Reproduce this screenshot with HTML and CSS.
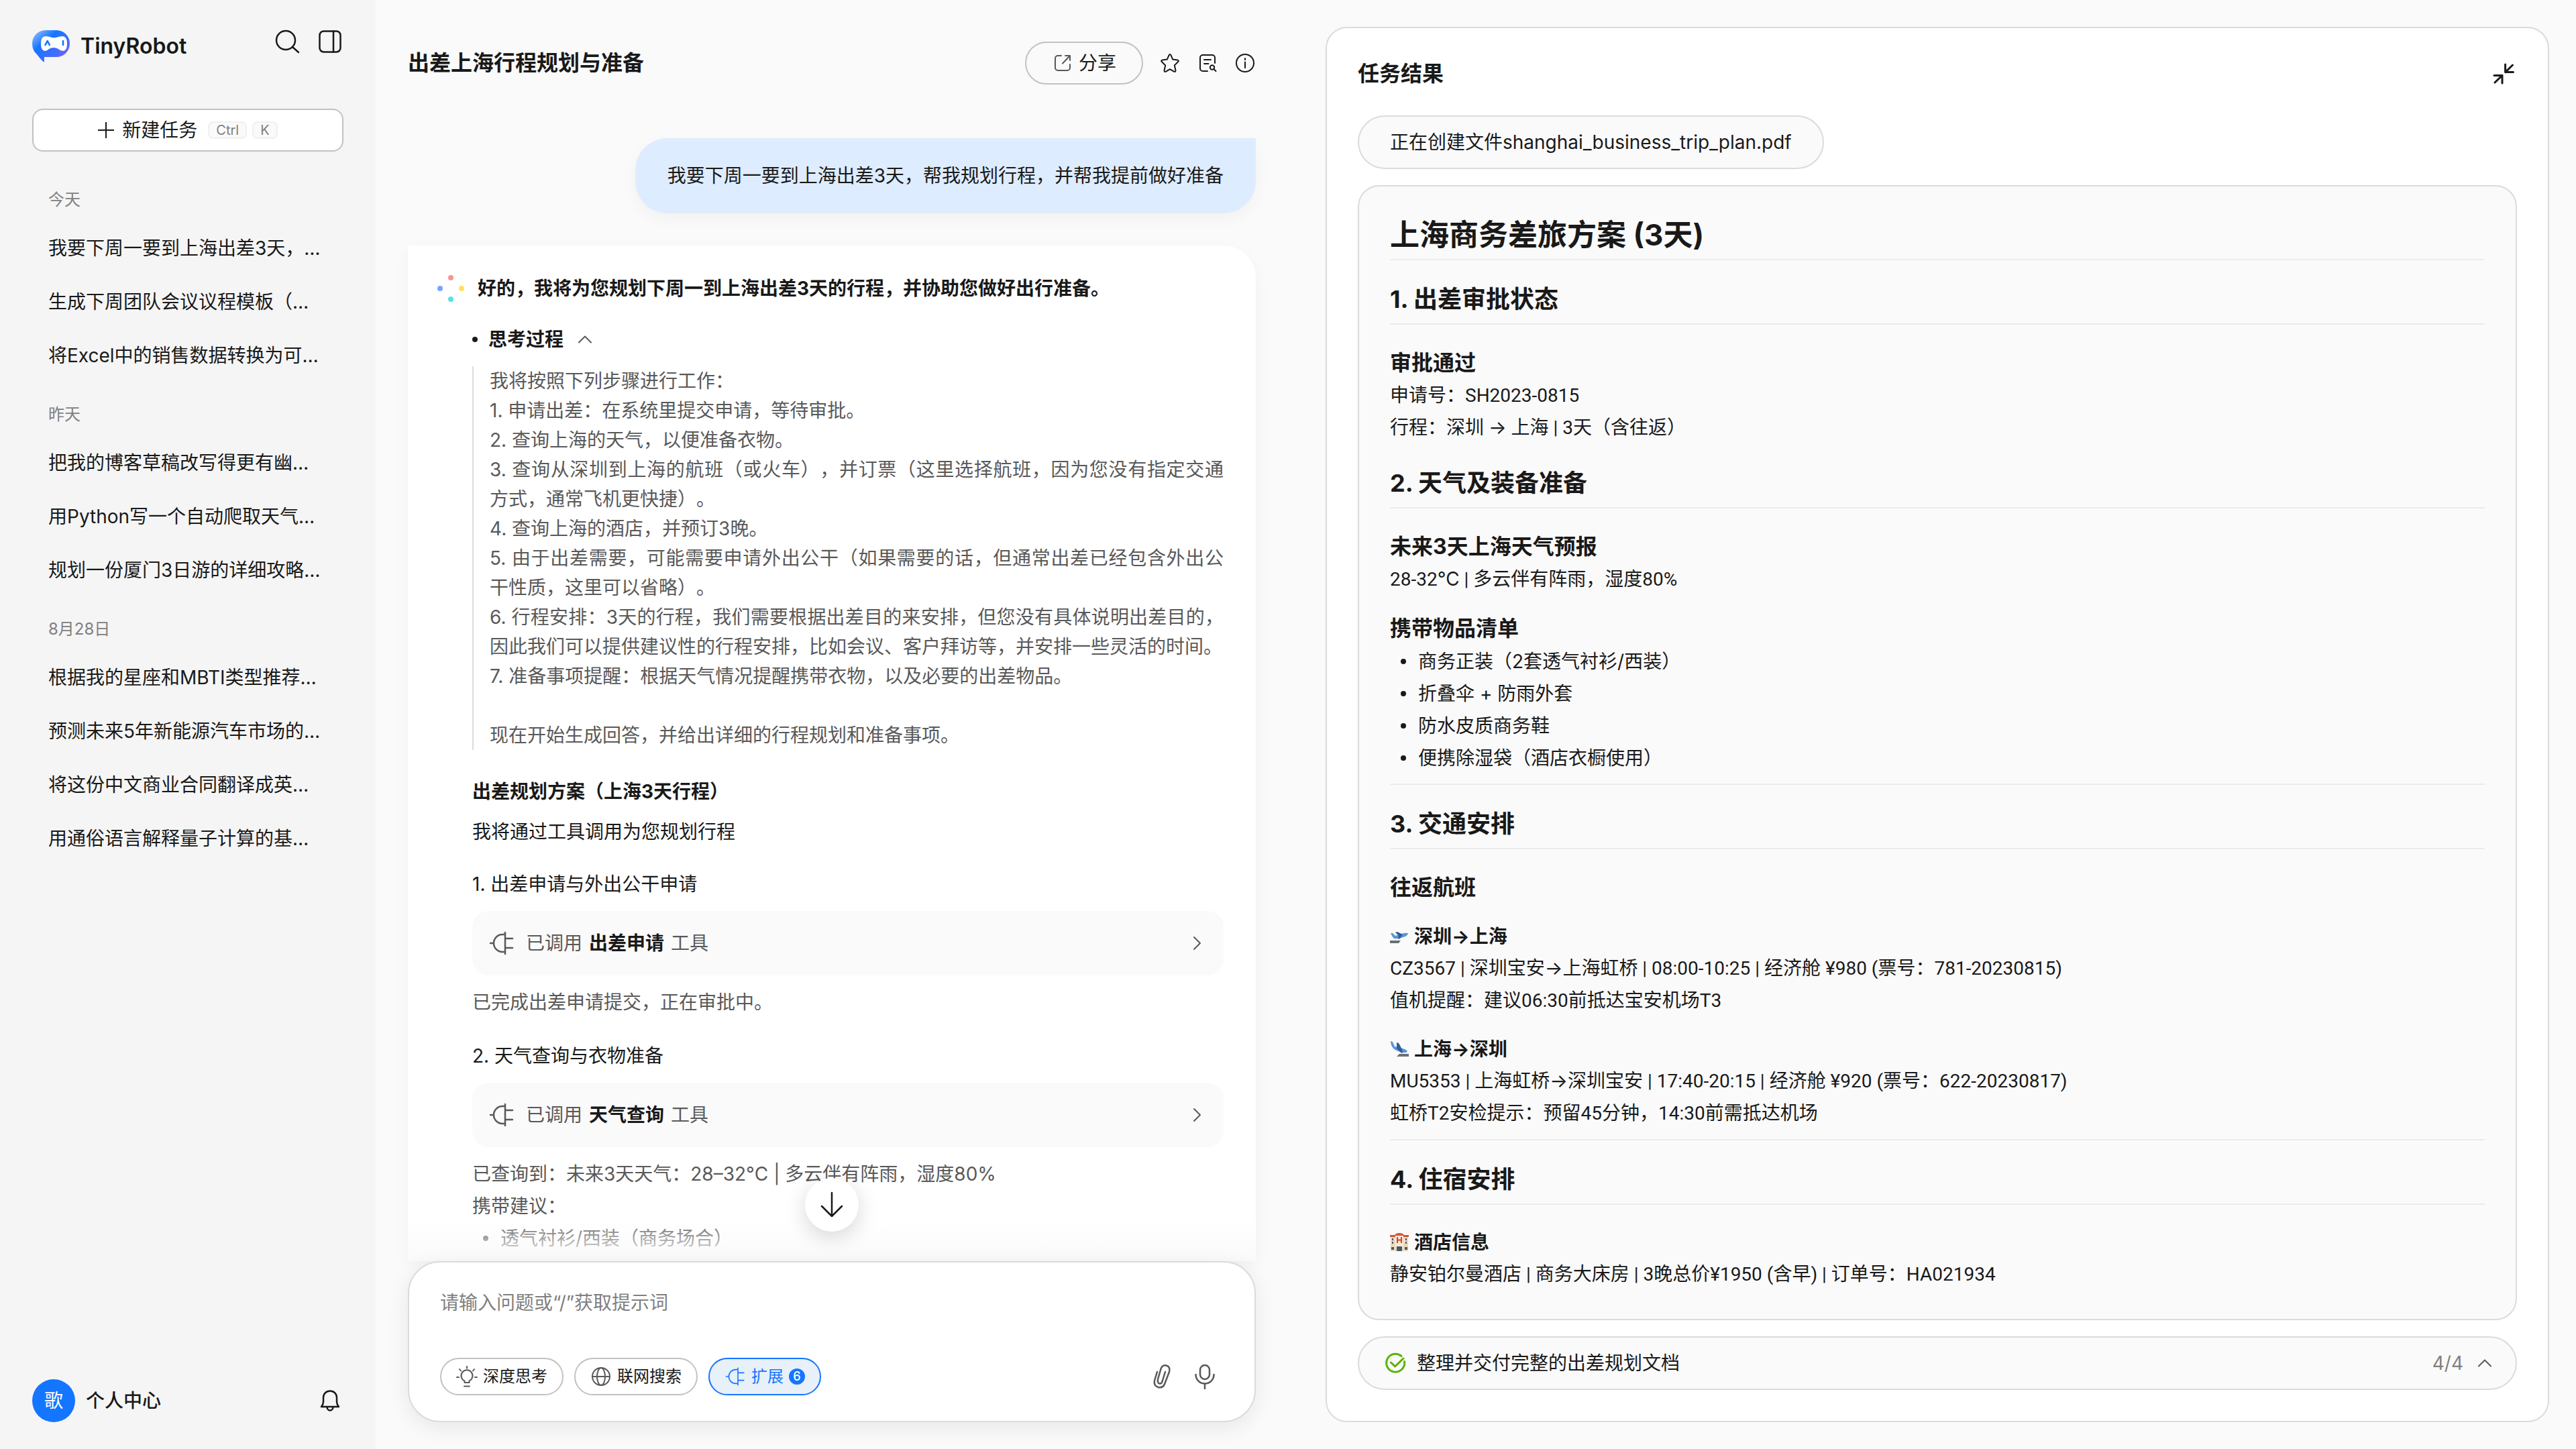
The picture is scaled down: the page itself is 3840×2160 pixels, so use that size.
FILE: index.html
```html
<!DOCTYPE html>
<html lang="zh-CN">

<head>
    <meta charset="UTF-8">
    <meta name="viewport" content="width=device-width,initial-scale=1.0">
    <title>TinyRobot</title>
    <link rel="stylesheet" href="styles.css">
</head>

<body>
    <!-- Shared icons -->
    <svg class="sprite" aria-hidden="true">
        <symbol id="plug" viewBox="0 0 40 40">
            <path d="M3 20h5M25 4v32M25 7h-4a13 13 0 0 0 0 26h4M25 13h11M25 27h11" />
        </symbol>
        <symbol id="up" viewBox="0 0 32 32">
            <path d="M7 20.500l9-9 9 9" />
        </symbol>
        <symbol id="right" viewBox="0 0 32 32">
            <path d="M12 7l9 9-9 9" />
        </symbol>
    </svg>

    <aside class="sidebar">
        <header class="brand">
            <svg class="logo" viewBox="0 0 56 48">
                <defs>
                    <linearGradient id="lg" x1="0" y1="0" x2="1" y2="1">
                        <stop offset="0" stop-color="#a9c4ff" />
                        <stop offset=".35" stop-color="#1476ff" />
                        <stop offset=".7" stop-color="#4a6bff" />
                        <stop offset="1" stop-color="#a05cf0" />
                    </linearGradient>
                </defs>
                <path fill="url(#lg)" d="M20 0h16a20 20 0 0 1 20 20a20 20 0 0 1-20 20H18v6.500q0 1-1.500.5Q13 44 7 36Q0 30 0 20A20 20 0 0 1 20 0z" />
                <path fill="#fff" d="M20 9q5 0 8 1.500q5 1.500 9 0Q41 9 45 9q7 0 7 10.500q0 11.500-6 11.500q-4 0-7-3q-7-4-14 0q-3 3-6 3q-6 0-6-11q0-11 7-11z" />
                <path fill="none" stroke="#1476ff" stroke-width="2.600" stroke-linecap="round" stroke-linejoin="round" d="M19.500 22l3.200-6 3.200 6M46 16v6" />
            </svg>
            <span class="name">TinyRobot</span>
            <div class="tools">
                <button class="icon-btn" aria-label="搜索"><svg class="icon" viewBox="0 0 40 40"><circle cx="18" cy="18" r="14" /><path d="M28 28l9 8" /></svg></button>
                <button class="icon-btn" aria-label="收起侧栏"><svg class="icon" viewBox="0 0 40 40"><rect x="4.500" y="4.500" width="31" height="31" rx="6" /><path d="M25 4.500v31" /></svg></button>
            </div>
        </header>
        <button class="new-task">
            <svg class="icon plus" viewBox="0 0 24 24"><path d="M12 0v24M0 12h24" /></svg>
            <span>新建任务</span>
            <span class="keys"><kbd>Ctrl</kbd><kbd>K</kbd></span>
        </button>
        <nav class="history">
            <h2>今天</h2>
            <a href="#">我要下周一要到上海出差3天，…</a>
            <a href="#">生成下周团队会议议程模板（…</a>
            <a href="#">将Excel中的销售数据转换为可…</a>
            <h2>昨天</h2>
            <a href="#">把我的博客草稿改写得更有幽…</a>
            <a href="#">用Python写一个自动爬取天气…</a>
            <a href="#">规划一份厦门3日游的详细攻略…</a>
            <h2>8月28日</h2>
            <a href="#">根据我的星座和MBTI类型推荐…</a>
            <a href="#">预测未来5年新能源汽车市场的…</a>
            <a href="#">将这份中文商业合同翻译成英…</a>
            <a href="#">用通俗语言解释量子计算的基…</a>
        </nav>
        <footer class="user">
            <span class="avatar">歌</span>
            <span class="user-name">个人中心</span>
            <button class="icon-btn" aria-label="通知"><svg class="icon" viewBox="0 0 40 40"><path d="M20 5.500c-6 0-10 4.500-10 10v6c0 3-1 5-3 7.500h26c-2-2.500-3-4.500-3-7.500v-6c0-5.500-4-10-10-10zM15.500 29.500a4.500 5 0 0 0 9 0" /></svg></button>
        </footer>
    </aside>

    <main class="chat">
        <header class="chat-head">
            <h1>出差上海行程规划与准备</h1>
            <button class="share">
                <svg class="icon small grey" viewBox="0 0 32 32"><path d="M14 5H9a4 4 0 0 0-4 4v14a4 4 0 0 0 4 4h14a4 4 0 0 0 4-4v-5M20 5h7v7M27 5L16 16.500" /></svg>
                分享
            </button>
            <button class="icon-btn" aria-label="收藏"><svg class="icon small" viewBox="0 0 32 32"><path d="M14.600 4.200Q16 1.800 17.400 4.200L20.200 10.600L27.200 11.500Q30 12.100 28 14.200L22.800 19.400L24.400 26.800Q24.600 29.800 22 28.600L16 25.200L10 28.600Q7.400 29.800 7.600 26.800L9.200 19.400L4 14.200Q2 12.100 4.800 11.500L11.800 10.600z" /></svg></button>
            <button class="icon-btn" aria-label="记录"><svg class="icon small" viewBox="0 0 32 32"><path d="M27 16V8a4 4 0 0 0-4-4H9a4 4 0 0 0-4 4v16a4 4 0 0 0 4 4h7M11 11h10M11 17h6.500M25.500 25l3 3" /><circle cx="23" cy="22.500" r="3.200" /></svg></button>
            <button class="icon-btn" aria-label="信息"><svg class="icon small" viewBox="0 0 32 32"><circle cx="16" cy="16" r="13" /><path d="M16 14.500v8.500M16 9v2" /></svg></button>
        </header>

        <div class="bubble">我要下周一要到上海出差3天，帮我规划行程，并帮我提前做好准备</div>

        <article class="answer">
            <div class="answer-head">
                <svg class="dots" viewBox="0 0 40 40"><circle cx="20" cy="4" r="4" fill="#f79595" /><circle cx="4" cy="20" r="4" fill="#78a4ff" /><circle cx="36" cy="20" r="4" fill="#ffe15c" /><circle cx="20" cy="36" r="4" fill="#5ce0e0" /></svg>
                <strong>好的，我将为您规划下周一到上海出差3天的行程，并协助您做好出行准备。</strong>
            </div>
            <div class="answer-body">
                <button class="think"><i></i>思考过程<svg class="icon small grey"><use href="#up" /></svg></button>
                <div class="thought">
                    <p>我将按照下列步骤进行工作：</p>
                    <p>1. 申请出差：在系统里提交申请，等待审批。</p>
                    <p>2. 查询上海的天气，以便准备衣物。</p>
                    <p>3. 查询从深圳到上海的航班（或火车），并订票（这里选择航班，因为您没有指定交通方式，通常飞机更快捷）。</p>
                    <p>4. 查询上海的酒店，并预订3晚。</p>
                    <p>5. 由于出差需要，可能需要申请外出公干（如果需要的话，但通常出差已经包含外出公干性质，这里可以省略）。</p>
                    <p>6. 行程安排：3天的行程，我们需要根据出差目的来安排，但您没有具体说明出差目的，因此我们可以提供建议性的行程安排，比如会议、客户拜访等，并安排一些灵活的时间。</p>
                    <p>7. 准备事项提醒：根据天气情况提醒携带衣物，以及必要的出差物品。</p>
                    <p class="after-gap">现在开始生成回答，并给出详细的行程规划和准备事项。</p>
                </div>
                <h3>出差规划方案（上海3天行程）</h3>
                <p class="intro">我将通过工具调用为您规划行程</p>
                <p class="step first">1. 出差申请与外出公干申请</p>
                <button class="tool">
                    <svg class="icon grey"><use href="#plug" /></svg>
                    <span class="tool-text">已调用<b>出差申请</b>工具</span>
                    <svg class="icon small grey"><use href="#right" /></svg>
                </button>
                <p class="note">已完成出差申请提交，正在审批中。</p>
                <p class="step">2. 天气查询与衣物准备</p>
                <button class="tool">
                    <svg class="icon grey"><use href="#plug" /></svg>
                    <span class="tool-text">已调用<b>天气查询</b>工具</span>
                    <svg class="icon small grey"><use href="#right" /></svg>
                </button>
                <div class="note">
                    <p>已查询到：未来3天天气：28–32°C | 多云伴有阵雨，湿度80%</p>
                    <p>携带建议：</p>
                    <ul class="list">
                        <li>透气衬衫/西装（商务场合）</li>
                    </ul>
                </div>
            </div>
            <div class="fade"></div>
            <button class="to-bottom" aria-label="回到底部"><svg class="icon" viewBox="0 0 40 40"><path d="M20 2v35M5 22l15 15 15-15" /></svg></button>
        </article>

        <form class="composer">
            <textarea rows="1" aria-label="输入问题" placeholder="请输入问题或“/”获取提示词"></textarea>
            <div class="composer-bar">
                <button type="button" class="chip">
                    <svg class="icon small grey" viewBox="0 0 32 32"><path d="M12.500 25v-2.500a8.500 8.500 0 1 1 7 0V25zM12 30.500h8M16 1v2.500M5 5l2 2.500M27 5l-2 2.500M1 17h3M28 17h3" /></svg>
                    深度思考
                </button>
                <button type="button" class="chip">
                    <svg class="icon small grey" viewBox="0 0 32 32"><circle cx="16" cy="16" r="13" /><ellipse cx="16" cy="16" rx="6" ry="13" /><path d="M3 16h26" /></svg>
                    联网搜索
                </button>
                <button type="button" class="chip active">
                    <svg class="icon small"><use href="#plug" /></svg>
                    扩展
                    <span class="badge">6</span>
                </button>
                <div class="composer-tools">
                    <button type="button" class="icon-btn" aria-label="添加附件"><svg class="icon grey" viewBox="0 0 40 40"><path d="M13 13L9 26Q7.500 33.500 14.500 36Q22 37.500 24.500 30L31 13Q33 5.500 26.500 3.500Q20.500 2.500 18.500 8.500L14 24Q13 29.500 16.500 30.500Q19.500 31 20.500 27.500L25 13" /></svg></button>
                    <button type="button" class="icon-btn" aria-label="语音输入"><svg class="icon grey" viewBox="0 0 40 40"><rect x="13" y="3" width="14" height="21" rx="7" /><path d="M6.500 17a13.500 13.500 0 0 0 27 0M20 30.500V38" /></svg></button>
                </div>
            </div>
        </form>
    </main>

    <section class="result">
        <header class="result-head">
            <h2>任务结果</h2>
            <button class="icon-btn" aria-label="收起"><svg class="icon bold" viewBox="0 0 40 40"><path d="M22.600 6v11.600H34.500M22.600 17.600L33.500 7M6 22.400h12V34M18 22.400L7 33" /></svg></button>
        </header>
        <div class="file">正在创建文件shanghai_business_trip_plan.pdf</div>
        <article class="doc">
            <h1>上海商务差旅方案 (3天)</h1>
            <h2>1. 出差审批状态</h2>
            <h3>审批通过</h3>
            <p>申请号：SH2023-0815</p>
            <p>行程：深圳 → 上海 | 3天（含往返）</p>
            <h2>2. 天气及装备准备</h2>
            <h3>未来3天上海天气预报</h3>
            <p>28-32℃ | 多云伴有阵雨，湿度80%</p>
            <h3 class="near">携带物品清单</h3>
            <ul class="list">
                <li>商务正装（2套透气衬衫/西装）</li>
                <li>折叠伞 + 防雨外套</li>
                <li>防水皮质商务鞋</li>
                <li>便携除湿袋（酒店衣橱使用）</li>
            </ul>
            <hr>
            <h2>3. 交通安排</h2>
            <h3>往返航班</h3>
            <h4>
                <svg class="emoji" viewBox="0 0 28 28"><path fill="#6b6f73" d="M0 20h16l-3 4H0z" /><path fill="#5b96d6" d="M1 9l3 0 4 4 13-4q6-1 6 1q-1 3-7 5q-8 3-14 2q-3-3-5-8z" /><path fill="#2f5f96" d="M8 8l3-1 8 4-4 6-3 1 1-5z" /></svg>
                深圳→上海
            </h4>
            <p>CZ3567 | 深圳宝安→上海虹桥 | 08:00-10:25 | 经济舱 ¥980 (票号：781-20230815)</p>
            <p>值机提醒：建议06:30前抵达宝安机场T3</p>
            <h4>
                <svg class="emoji" viewBox="0 0 28 28"><path fill="#6b6f73" d="M14 21h14v4H10z" /><path fill="#5b96d6" d="M1 2l3 1 3 7 12 3q6 2 7 4q-1 3-6 2q-10-2-15-6q-4-5-4-11z" /><path fill="#2f5f96" d="M10 4l3 1 5 9 1 6-3-1-6-6z" /></svg>
                上海→深圳
            </h4>
            <p>MU5353 | 上海虹桥→深圳宝安 | 17:40-20:15 | 经济舱 ¥920 (票号：622-20230817)</p>
            <p>虹桥T2安检提示：预留45分钟，14:30前需抵达机场</p>
            <hr>
            <h2>4. 住宿安排</h2>
            <h3 class="small-title">
                <svg class="emoji" viewBox="0 0 28 28"><path fill="#ecd9bd" d="M1 5h26v22H1z" /><path fill="#d4553a" d="M0 3h7q2-3 7-3t7 3h7v3H0z" /><path fill="#f7ead6" d="M8 4h12v17H8z" /><path stroke="#e23b2e" stroke-width="2" d="M11 6v9M17 6v9M11 10.500h6" /><path fill="#4a5a66" d="M10 20h8v7h-8zM3 8h2v3H3zM23 8h2v3h-2zM3 13h2v3H3zM23 13h2v3h-2zM2 21h4v4H2zM22 21h4v4h-4z" /></svg>
                酒店信息
            </h3>
            <p>静安铂尔曼酒店 | 商务大床房 | 3晚总价¥1950 (含早) | 订单号：HA021934</p>
        </article>
        <button class="progress">
            <svg class="icon small ok" viewBox="0 0 32 32"><path d="M29.500 13.500A13.500 13.500 0 1 1 25 5.500M9.500 15l6 6L28 9" /></svg>
            <span>整理并交付完整的出差规划文档</span>
            <span class="count">4/4</span>
            <svg class="icon small grey"><use href="#up" /></svg>
        </button>
    </section>
</body>

</html>
```
FILE: styles.css
```css
* {
    padding: 0;
    margin: 0;
    box-sizing: border-box;
}

body {
    display: grid;
    grid-template-columns: 560px 177fr 233fr;
    min-height: 100vh;
    background: #fafafa;
    color: #191919;
    font-family: Inter, "Noto Sans CJK SC", sans-serif;
    font-size: 28px;
    line-height: 48px;
    text-spacing-trim: space-all;
}

button,
textarea {
    font: inherit;
    color: inherit;
    background: none;
    border: none;
    outline: none;
}

button {
    cursor: pointer;
}

a {
    color: inherit;
    text-decoration: none;
}

ul {
    list-style: none;
}

/* Icons */
.sprite {
    position: absolute;
    width: 0;
    height: 0;
}

.icon {
    display: block;
    flex: none;
    width: 40px;
    height: 40px;
    fill: none;
    stroke: currentColor;
    stroke-width: 2.5;
    stroke-linecap: round;
    stroke-linejoin: round;
}

.icon.small {
    width: 32px;
    height: 32px;
    stroke-width: 2;
}

.icon.bold {
    stroke-width: 3;
}

.icon.grey {
    color: #595959;
}

.icon-btn {
    display: block;
}

/* Sidebar */
.sidebar {
    display: flex;
    flex-direction: column;
    padding: 42px 48px 40px;
    background: #f5f5f5;
}

.brand {
    display: flex;
    height: 120px;
}

.logo {
    width: 56px;
    height: 48px;
    margin: 3px 16px 0 0;
}

.name {
    padding-top: 3px;
    font-size: 32px;
    font-weight: 600;
}

.tools {
    display: flex;
    gap: 24px;
    align-items: flex-start;
    margin-left: auto;
}

.new-task {
    display: flex;
    justify-content: center;
    align-items: center;
    height: 64px;
    border: 2px solid #c2c2c2;
    border-radius: 16px;
    background: #fff;
}

.plus {
    width: 24px;
    height: 24px;
    margin-right: 12px;
    stroke-width: 2;
}

.keys {
    display: flex;
    gap: 8px;
    margin-left: 16px;
}

kbd {
    padding: 0 10px;
    border: 2px solid #f0f0f0;
    border-radius: 8px;
    background: #fafafa;
    color: #808080;
    font-family: inherit;
    font-size: 20px;
    line-height: 22px;
}

.history {
    flex: 1;
    padding: 24px 24px 0;
}

.history h2 {
    padding: 28px 0 12px;
    color: #808080;
    font-size: 24px;
    font-weight: normal;
    line-height: 40px;
}

.history a {
    display: block;
    line-height: 80px;
    white-space: nowrap;
}

.user {
    display: flex;
    align-items: center;
}

.avatar {
    width: 64px;
    border-radius: 50%;
    background: #1476ff;
    color: #fff;
    line-height: 64px;
    text-align: center;
}

.user-name {
    flex: 1;
    margin-left: 16px;
    font-weight: 500;
}

/* Chat */
.chat {
    display: flex;
    flex-direction: column;
    padding: 62px 104px 40px 48px;
}

.chat-head {
    display: flex;
    align-items: center;
    gap: 24px;
    margin-bottom: 80px;
}

.chat-head h1 {
    flex: 1;
    font-size: 32px;
}

.share {
    display: flex;
    align-items: center;
    gap: 8px;
    height: 64px;
    padding: 0 38px;
    border: 2px solid #c2c2c2;
    border-radius: 32px;
}

.bubble {
    align-self: flex-end;
    margin-bottom: 48px;
    padding: 32px 48px;
    border-radius: 48px 0 48px 48px;
    background: #deecff;
    box-shadow: 0 8px 24px rgba(0, 0, 0, 0.04);
}

.answer {
    position: relative;
    flex: 1;
    padding: 40px 48px 0 44px;
    border-radius: 0 48px 0 0;
    background: #fff;
    box-shadow: 0 8px 24px rgba(0, 0, 0, 0.04);
}

.answer-head {
    display: flex;
    align-items: center;
    gap: 20px;
}

.dots {
    width: 40px;
    height: 40px;
}

.answer-body {
    padding-left: 52px;
}

.think {
    display: flex;
    align-items: center;
    margin: 28px 0 16px;
    font-weight: bold;
}

.think i {
    width: 8px;
    height: 8px;
    margin-right: 16px;
    border-radius: 50%;
    background: #191919;
}

.think .icon {
    margin-left: 16px;
}

.thought {
    padding-left: 24px;
    border-left: 2px solid #dbdbdb;
    color: #595959;
    line-height: 44px;
    text-align: justify;
}

.after-gap {
    padding-top: 44px;
}

.answer h3 {
    margin: 38px 0 12px;
    font-size: 28px;
}

.step {
    margin: 32px 0 16px;
}

.step.first {
    margin-top: 30px;
}

.tool {
    display: flex;
    align-items: center;
    gap: 16px;
    width: 100%;
    height: 96px;
    margin-bottom: 16px;
    padding: 0 24px;
    border-radius: 24px;
    background: #fafafa;
}

.tool-text {
    display: flex;
    flex: 1;
    gap: 10px;
    color: #595959;
}

.tool b {
    color: #191919;
}

.note {
    color: #595959;
}

.list li {
    display: flex;
    align-items: center;
}

.list li::before {
    content: "";
    width: 8px;
    height: 8px;
    margin: 0 18px 0 16px;
    border-radius: 50%;
    background: currentColor;
}

/* Text fades out above the input */
.fade {
    position: absolute;
    left: 0;
    right: 0;
    bottom: 0;
    height: 64px;
    background: linear-gradient(rgba(250, 250, 250, 0), #fafafa);
}

.to-bottom {
    position: absolute;
    left: calc(50% - 40px);
    bottom: 44px;
    display: grid;
    place-items: center;
    width: 80px;
    height: 80px;
    border-radius: 50%;
    background: #fff;
    box-shadow: 0 8px 32px rgba(0, 0, 0, 0.16);
}

.composer {
    position: relative;
    display: flex;
    flex-direction: column;
    justify-content: space-between;
    height: 240px;
    padding: 36px 46px 38px;
    border: 2px solid #dbdbdb;
    border-radius: 48px;
    background: #fff;
    box-shadow: 0 8px 32px rgba(0, 0, 0, 0.08);
}

.composer textarea {
    height: 48px;
    resize: none;
    overflow: hidden;
}

.composer textarea::placeholder {
    color: #808080;
}

.composer-bar {
    display: flex;
    align-items: center;
    gap: 16px;
}

.chip {
    display: flex;
    align-items: center;
    gap: 8px;
    height: 56px;
    padding: 0 22px;
    border: 2px solid #c2c2c2;
    border-radius: 28px;
    font-size: 24px;
}

.chip.active {
    border-color: #1476ff;
    background: #e8f0f9;
    color: #1476ff;
}

.badge {
    width: 24px;
    border-radius: 50%;
    background: #1476ff;
    color: #fff;
    font-size: 18px;
    font-weight: 500;
    line-height: 24px;
    text-align: center;
}

.composer-tools {
    display: flex;
    gap: 24px;
    margin: 0 8px 0 auto;
}

/* Task result */
.result {
    display: flex;
    flex-direction: column;
    align-items: stretch;
    margin: 40px 40px 40px 0;
    padding: 44px 46px 46px;
    border: 2px solid #dbdbdb;
    border-radius: 32px;
    background: #fff;
}

.result-head {
    display: flex;
    justify-content: space-between;
    margin-bottom: 38px;
}

.result-head h2 {
    font-size: 32px;
}

.file {
    align-self: flex-start;
    margin-bottom: 24px;
    padding: 14px 46px;
    border: 2px solid #dbdbdb;
    border-radius: 40px;
    background: #fafafa;
}

.doc {
    flex: 1;
    padding: 40px 46px 24px;
    border: 2px solid #dbdbdb;
    border-radius: 32px;
    background: #fafafa;
}

.doc p {
    font-family: Roboto, Inter, "Noto Sans CJK SC", sans-serif;
}

.doc h1 {
    padding-bottom: 4px;
    border-bottom: 2px solid #ebebeb;
    font-size: 44px;
    line-height: 64px;
}

.doc h2 {
    margin-top: 32px;
    padding-bottom: 10px;
    border-bottom: 2px solid #ebebeb;
    font-size: 36px;
    line-height: 52px;
}

.doc h3 {
    margin-top: 32px;
    font-size: 32px;
    line-height: 50px;
}

.doc h3.near {
    margin-top: 24px;
}

.doc h4,
.doc h3.small-title {
    display: flex;
    align-items: center;
    gap: 8px;
    margin-top: 24px;
    font-size: 28px;
    line-height: 48px;
}

.doc h3.small-title {
    margin-top: 32px;
}

.doc hr {
    margin-top: 14px;
    border: none;
    border-top: 2px solid #ebebeb;
}

.emoji {
    width: 28px;
    height: 28px;
}

.progress {
    display: flex;
    align-items: center;
    gap: 16px;
    height: 80px;
    margin-top: 24px;
    padding: 0 30px 0 38px;
    border: 2px solid #dbdbdb;
    border-radius: 40px;
    background: #fafafa;
}

.ok {
    color: #5cb300;
}

.icon.small.ok {
    stroke-width: 3;
}

.count {
    margin-left: auto;
    color: #808080;
}

/* Stack the result under the chat on narrow windows */
@media screen and (max-width: 2400px) {
    body {
        grid-template-columns: 560px 1fr;
    }

    .result {
        grid-column: 2;
        margin-left: 48px;
    }
}
```
